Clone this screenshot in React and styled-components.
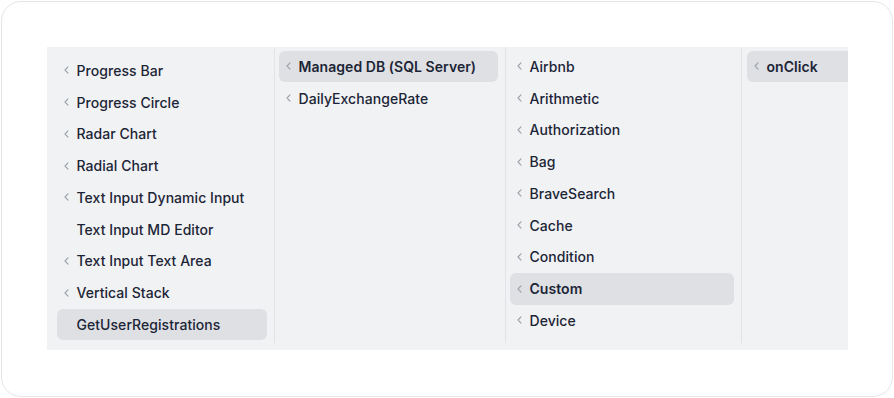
import React from 'react';
import styled, { createGlobalStyle } from 'styled-components';

const Global = createGlobalStyle`
  html, body { margin: 0; padding: 0; background: #ffffff; }
  body { font-family: Inter, "Noto Sans", sans-serif; }
`;

const Page = styled.div`
  padding: 1px;
  width: 894px;
  height: 398px;
  box-sizing: border-box;
`;

const Card = styled.div`
  box-sizing: border-box;
  height: 100%;
  border: 1.5px solid #e3e5e9;
  border-radius: 20px;
  padding: 44.5px 44.5px 0;
  background: #fff;
`;

const Panel = styled.div`
  display: flex;
  height: 303px;
  background: #f1f2f4;
  overflow: hidden;
  padding-bottom: 7px;
  box-sizing: border-box;
`;

const Column = styled.div`
  flex: none;
  width: ${p => p.$w}px;
  box-sizing: border-box;
  padding: ${p => p.$top}px 7px 0 ${p => p.$left}px;
  border-right: ${p => (p.$last ? 'none' : '1px solid #e2e3e7')};
  display: flex;
  flex-direction: column;
`;

const Item = styled.div`
  position: relative;
  height: 31.75px;
  flex: none;
  display: flex;
  align-items: center;
  padding-left: 20px;
  border-radius: 6px;
  background: ${p => (p.$active ? '#dfe0e4' : 'transparent')};
  color: #1c2536;
  font-size: 14px;
  font-weight: ${p => (p.$bold ? 600 : 500)};
  letter-spacing: 0.05px;
  white-space: nowrap;
`;

const Chevron = styled.svg`
  position: absolute;
  left: 7px;
  top: 50%;
  margin-top: -4px;
  width: 5px;
  height: 8px;
`;

const Arrow = () => (
  <Chevron viewBox="0 0 5 8">
    <polyline points="4,0.8 1,4 4,7.2" fill="none" stroke="#9aa0aa" strokeWidth="1.1" strokeLinecap="round" strokeLinejoin="round" />
  </Chevron>
);

const columns = [
  {
    w: 228, top: 8, left: 10,
    items: [
      ['Progress Bar', 1], ['Progress Circle', 1], ['Radar Chart', 1], ['Radial Chart', 1],
      ['Text Input Dynamic Input', 1], ['Text Input MD Editor', 0], ['Text Input Text Area', 1],
      ['Vertical Stack', 1], ['GetUserRegistrations', 0, 'active'],
    ],
  },
  {
    w: 231, top: 4, left: 4,
    items: [['Managed DB (SQL Server)', 1, 'active', 'bold'], ['DailyExchangeRate', 1]],
  },
  {
    w: 236, top: 4, left: 4,
    items: [
      ['Airbnb', 1], ['Arithmetic', 1], ['Authorization', 1], ['Bag', 1], ['BraveSearch', 1],
      ['Cache', 1], ['Condition', 1], ['Custom', 1, 'active', 'bold'], ['Device', 1],
    ],
  },
  {
    w: 120, top: 4, left: 5, last: true,
    items: [['onClick', 1, 'active', 'bold']],
  },
];

export default function App() {
  return (
    <Page>
      <Global />
      <Card>
        <Panel>
          {columns.map((c, i) => (
            <Column key={i} $w={c.w} $top={c.top} $left={c.left} $last={c.last}>
              {c.items.map(([label, arrow, active, bold]) => (
                <Item key={label} $active={!!active} $bold={!!bold}>
                  {arrow ? <Arrow /> : null}
                  {label}
                </Item>
              ))}
            </Column>
          ))}
        </Panel>
      </Card>
    </Page>
  );
}
